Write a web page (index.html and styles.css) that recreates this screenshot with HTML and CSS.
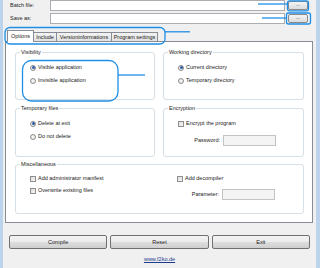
FILE: index.html
```html
<!DOCTYPE html>
<html>
<head>
<meta charset="utf-8">
<link rel="stylesheet" href="styles.css">
</head>
<body>
<div class="window">
  <div class="top">
    <div class="frow"><span class="flabel">Batch file:</span><span class="input"></span><span class="dots">...</span></div>
    <div class="frow"><span class="flabel">Save as:</span><span class="input"></span><span class="dots">...</span></div>
  </div>
  <div class="tabs">
    <span class="tab active w-opt">Options</span>
    <span class="tab w-inc">Include</span>
    <span class="tab w-ver">Versioninformations</span>
    <span class="tab w-prog">Program settings</span>
  </div>
  <div class="panel">
    <div class="grid">
      <div class="group">
        <span class="legend">Visibility</span>
        <div class="opts">
          <div class="opt"><span class="radio on"></span>Visible application</div>
          <div class="opt"><span class="radio"></span>Invisible application</div>
        </div>
      </div>
      <div class="group">
        <span class="legend">Working directory</span>
        <div class="opts">
          <div class="opt"><span class="radio on"></span>Current directory</div>
          <div class="opt"><span class="radio"></span>Temporary directory</div>
        </div>
      </div>
      <div class="group">
        <span class="legend">Temporary files</span>
        <div class="opts">
          <div class="opt"><span class="radio on"></span>Delete at exit</div>
          <div class="opt"><span class="radio"></span>Do not delete</div>
        </div>
      </div>
      <div class="group">
        <span class="legend">Encryption</span>
        <div class="opts">
          <div class="opt"><span class="check"></span>Encrypt the program</div>
          <div class="field"><span class="flab">Password:</span><span class="tinput"></span></div>
        </div>
      </div>
    </div>
    <div class="group misc">
      <span class="legend">Miscellaneous</span>
      <div class="misc-cols">
        <div class="opts">
          <div class="opt"><span class="check"></span>Add administrator manifest</div>
          <div class="opt"><span class="check"></span>Overwrite existing files</div>
        </div>
        <div class="opts">
          <div class="opt"><span class="check"></span>Add decompiler</div>
          <div class="field"><span class="flab">Parameter:</span><span class="tinput"></span></div>
        </div>
      </div>
    </div>
  </div>
  <div class="buttons">
    <span class="btn">Compile</span>
    <span class="btn">Reset</span>
    <span class="btn">Exit</span>
  </div>
  <div class="link"><a href="#">www.f2ko.de</a></div>
  <svg class="annot" width="320" height="268" viewBox="0 0 320 268">
    <g fill="none" stroke="#1f8fe6" stroke-width="1.3">
      <rect x="287.5" y="0.8" width="21" height="10" rx="2"/>
      <line x1="258" y1="4" x2="287.5" y2="4"/>
      <rect x="286.5" y="13" width="24" height="11" rx="2"/>
      <line x1="262" y1="18" x2="286.5" y2="18"/>
      <rect x="5" y="27.5" width="160" height="16.5" rx="5"/>
      <line x1="165" y1="31.8" x2="190" y2="31.8"/>
      <rect x="22.5" y="60.5" width="95.5" height="40.5" rx="9"/>
      <line x1="118" y1="75" x2="145" y2="75"/>
    </g>
  </svg>
</div>
</body>
</html>
```
FILE: styles.css
```css
* { box-sizing: border-box; }
html, body { margin: 0; padding: 0; }
body {
  width: 320px;
  height: 268px;
  overflow: hidden;
  font-family: "Liberation Sans", Arial, sans-serif;
  font-size: 5.5px;
  color: #222;
  background: #f0f0f0;
}
.window {
  position: relative;
  width: 320px;
  height: 268px;
  border-left: 3px solid #bcd3ec;
  border-right: 4px solid #bcd3ec;
  display: flex;
  flex-direction: column;
  background: #f0f0f0;
}
.top {
  display: flex;
  flex-direction: column;
  gap: 2px;
  padding: 0 8px 0 7px;
}
.frow {
  height: 11px;
  display: flex;
  align-items: center;
}
.flabel {
  width: 40px;
  line-height: 7px;
}
.input {
  flex: 1;
  height: 11px;
  background: #fff;
  border: 1px solid #abadb3;
  margin-right: 3px;
}
.dots {
  width: 20px;
  height: 9px;
  border: 1px solid #8a8a8a;
  border-radius: 2px;
  background: linear-gradient(#f4f4f4, #dcdcdc);
  font-size: 5px;
  line-height: 5px;
  text-align: center;
  color: #333;
}
.tabs {
  display: flex;
  align-items: flex-end;
  margin: 6px 0 0 4px;
  height: 11px;
}
.tab {
  height: 9px;
  line-height: 8px;
  text-align: center;
  border: 1px solid #898c95;
  border-bottom: none;
  margin-right: -1px;
  background: linear-gradient(#f3f3f3, #e2e2e2);
  white-space: nowrap;
}
.tab.active {
  position: relative;
  z-index: 1;
  height: 12px;
  line-height: 10px;
  margin-bottom: -1px;
  background: #fff;
}
.w-opt { width: 27px; }
.w-inc { width: 24px; }
.w-ver { width: 56px; }
.w-prog { width: 47px; }
.panel {
  margin: 0 3px 0 2px;
  border: 1px solid #898c95;
  background: #fff;
  padding: 10px 8px 8px 9px;
}
.grid {
  display: grid;
  grid-template-columns: 140px 1fr;
  grid-template-rows: 48px 49px;
  gap: 8px;
}
.group {
  border: 1px solid #d5dfe5;
  border-radius: 3px;
}
.misc {
  margin-top: 7px;
  height: 50px;
}
.legend {
  display: block;
  width: max-content;
  margin: -4px 0 0 4px;
  padding: 0 1px;
  line-height: 7px;
  background: #fff;
}
.opts {
  display: flex;
  flex-direction: column;
  gap: 6px;
  padding: 8px 0 0 14px;
}
.misc .opts { padding-top: 7px; gap: 5px; }
.misc-cols {
  display: grid;
  grid-template-columns: 147px 1fr;
}
.opt {
  display: flex;
  align-items: center;
  gap: 2px;
  height: 7px;
  line-height: 7px;
  white-space: nowrap;
}
.radio {
  width: 6px;
  height: 6px;
  border-radius: 50%;
  border: 1px solid #8c8c8c;
  background: radial-gradient(circle, #f4f4f4 40%, #d8d8d8);
  display: flex;
  align-items: center;
  justify-content: center;
}
.radio.on::after {
  content: "";
  width: 3px;
  height: 3px;
  border-radius: 50%;
  background: #2f5fa8;
}
.check {
  width: 6px;
  height: 6px;
  border: 1px solid #8f8f8f;
  background: linear-gradient(135deg, #dcdcdc, #f7f7f7);
}
.field {
  display: flex;
  align-items: center;
  gap: 3px;
  height: 11px;
  padding-left: 14px;
  margin-top: 2px;
}
.flab {
  width: 28px;
  text-align: right;
  line-height: 7px;
}
.tinput {
  width: 53px;
  height: 11px;
  border: 1px solid #c3c3c3;
  background: #f4f4f4;
}
.buttons {
  display: flex;
  gap: 3px;
  padding: 0 6px;
  margin-top: 12px;
}
.btn {
  flex: 1;
  height: 14px;
  line-height: 12px;
  text-align: center;
  border: 1px solid #707070;
  border-radius: 2px;
  background: linear-gradient(#f3f3f3 0%, #ebebeb 50%, #dddddd 51%, #cfcfcf 100%);
}
.link {
  margin-top: 6px;
  text-align: center;
  line-height: 8px;
}
.link a {
  color: #1c3b8c;
  text-decoration: underline;
}
.annot {
  position: absolute;
  left: -3px;
  top: 0;
  pointer-events: none;
}
```
